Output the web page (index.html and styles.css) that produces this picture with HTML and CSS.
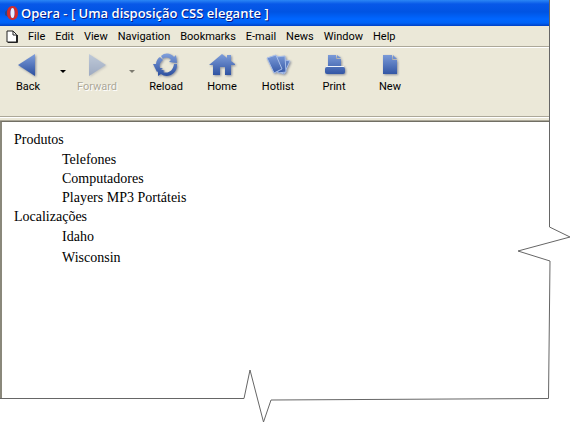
FILE: index.html
```
<!DOCTYPE html>
<html lang="pt">
<head>
<meta charset="utf-8">
<title>Uma disposição CSS elegante</title>
<link rel="stylesheet" href="styles.css">
</head>
<body>
<div class="window">
  <header class="titlebar">
    <svg class="logo" width="14" height="16" viewBox="0 0 14 16" aria-hidden="true">
      <path d="M0 7L3 4V12L0 10Z" fill="#24468f"/>
      <path fill-rule="evenodd" d="M7.500 1C11 1 13 4 13 8S11 15 7.500 15S2 12 2 8S4 1 7.500 1ZM7.500 3C6.200 3 5.500 5 5.500 8S6.200 13 7.500 13S9.500 11 9.500 8S8.800 3 7.500 3Z" fill="#d22c2c"/>
      <path d="M7.500 3C6.200 3 5.500 5 5.500 8S6.200 13 7.500 13S9.500 11 9.500 8S8.800 3 7.500 3Z" fill="#e8eefc"/>
    </svg>
    <h1 class="title">Opera - [ Uma disposição CSS elegante ]</h1>
  </header>
  <nav class="menubar">
    <svg class="page-icon" width="12" height="13" viewBox="0 0 12 13" aria-hidden="true">
      <path d="M1 1H7L10.500 4.500V12H1Z" fill="#fff" stroke="#222"/>
      <path d="M7 1V5H10.500M2 12.500H11.500V5" fill="none" stroke="#222"/>
    </svg>
    <button class="menu">File</button>
    <button class="menu">Edit</button>
    <button class="menu">View</button>
    <button class="menu">Navigation</button>
    <button class="menu">Bookmarks</button>
    <button class="menu">E-mail</button>
    <button class="menu">News</button>
    <button class="menu">Window</button>
    <button class="menu">Help</button>
  </nav>
  <div class="toolbar">
    <svg class="defs" width="0" height="0" aria-hidden="true">
      <linearGradient id="blue" x1="0" y1="0" x2="0" y2="26" gradientUnits="userSpaceOnUse">
        <stop offset="0" stop-color="#86a5e0"/><stop offset="1" stop-color="#24489a"/>
      </linearGradient>
    </svg>
    <button class="tool">
      <svg class="icon" width="28" height="26" viewBox="0 0 28 26" aria-hidden="true"><path d="M4 13L21 2V24Z"/></svg>
      <span>Back</span>
    </button>
    <button class="drop" aria-label="Back history"></button>
    <button class="tool" disabled>
      <svg class="icon" width="28" height="26" viewBox="0 0 28 26" aria-hidden="true"><path d="M6 2L23 13L6 24Z"/></svg>
      <span>Forward</span>
    </button>
    <button class="drop" aria-label="Forward history" disabled></button>
    <button class="tool">
      <svg class="icon" width="28" height="26" viewBox="0 0 28 26" aria-hidden="true">
        <path d="M9 4C13 0 19 1 22 5L24 3L25 11L17 10L19 8C17 5 13 5 11 7Z"/>
        <path d="M8 5L11 8C8 10 7 13 8 16L11 16L5 20L1 12L4 12C4 9 6 6 8 5Z"/>
        <path d="M22 12H25C26 22 15 27 9 22L6 24L6 16L13 19L11 20C16 22 21 19 22 12Z"/>
      </svg>
      <span>Reload</span>
    </button>
    <button class="tool">
      <svg class="icon" width="28" height="26" viewBox="0 0 28 26" aria-hidden="true"><path d="M1 13L14 2L19 6V3H23V9L27 12V13H23V23H17V15H12V23H5V13Z"/></svg>
      <span>Home</span>
    </button>
    <button class="tool">
      <svg class="icon split" width="28" height="26" viewBox="0 0 28 26" aria-hidden="true">
        <path d="M17 7L26 9L20 22L12 19Z"/><path d="M12 5L21 4L22 20L14 21Z"/><path d="M3 6L12 3L18 17L10 21Z"/>
      </svg>
      <span>Hotlist</span>
    </button>
    <button class="tool">
      <svg class="icon" width="28" height="26" viewBox="0 0 28 26" aria-hidden="true">
        <path d="M8 3H16V7H21V14H8Z"/><path d="M17 3L21 6H17Z"/><path d="M7 15H23Q25 15 25 17V20Q25 22 23 22H7Q5 22 5 20V17Q5 15 7 15Z"/><path class="shine" d="M6 14.500H24"/>
      </svg>
      <span>Print</span>
    </button>
    <button class="tool">
      <svg class="icon" width="28" height="26" viewBox="0 0 28 26" aria-hidden="true"><path d="M7 3H16V8H21V22H7Z"/><path d="M17 3L21 7H17Z"/></svg>
      <span>New</span>
    </button>
  </div>
  <main class="page">
    <ul class="list">
      <li>Produtos
        <ul class="sublist">
          <li>Telefones</li>
          <li>Computadores</li>
          <li>Players MP3 Portáteis</li>
        </ul>
      </li>
      <li>Localizações
        <ul class="sublist spaced">
          <li>Idaho</li>
          <li>Wisconsin</li>
        </ul>
      </li>
    </ul>
  </main>
</div>
<svg class="tear" viewBox="0 0 573 423" preserveAspectRatio="none" aria-hidden="true">
  <path d="M549.500 0V227L570 237L518 251L550 261L548.500 398.500L271 400L263.500 422L250 370L244 398.500H0"/>
</svg>
</body>
</html>
```
FILE: styles.css
```
* {
  box-sizing: border-box;
}

body {
  position: relative;
  display: flex;
  min-height: 100vh;
  margin: 0;
  padding: 0 23px 25px 0;
  background: #fff;
  font-family: Roboto, sans-serif;
  font-size: 11px;
}

button {
  padding: 0;
  border: 0;
  background: none;
  color: #000;
  font: inherit;
}

.window {
  display: flex;
  flex: 1;
  flex-direction: column;
}

.titlebar {
  display: flex;
  align-items: center;
  gap: 2px;
  height: 26px;
  padding-left: 5px;
  background: linear-gradient(#2b86f5 0, #0858e8 4px, #0054e3 12px, #0066ff 19px, #0062f5 23px, #003fc4 26px);
}

.title {
  margin: 0;
  color: #fff;
  font-family: "Open Sans", sans-serif;
  font-size: 13px;
  font-weight: 600;
  line-height: 16px;
  text-shadow: 1px 1px #0a1883;
  white-space: nowrap;
}

.menubar {
  display: flex;
  align-items: center;
  gap: 10px;
  height: 21px;
  padding-left: 6px;
  border-bottom: 1px solid #aca899;
  background: #ebe8d8;
}

.toolbar {
  display: flex;
  align-items: flex-start;
  height: 70px;
  padding-top: 4px;
  border-top: 1px solid #fff;
  border-bottom: 1px solid #aca899;
  background: #ebe8d8;
}

.defs {
  position: absolute;
}

.tool {
  display: flex;
  flex-direction: column;
  align-items: center;
  gap: 1px;
  width: 56px;
  line-height: 16px;
}

.tool:disabled {
  color: #aca899;
  text-shadow: 1px 1px #fff;
}

.icon {
  fill: url(#blue);
  filter: drop-shadow(1px 1px 1px #8d919c);
}

.split {
  stroke: #a9bfe9;
}

.shine {
  stroke: #eef2fa;
}

.tool:disabled .icon {
  opacity: 0.4;
}

.drop {
  width: 13px;
  height: 38px;
}

.drop::before {
  content: "";
  display: block;
  width: 0;
  margin: 0 auto;
  border: 3px solid transparent;
  border-top-color: #000;
  border-bottom: 0;
}

.drop:disabled::before {
  border-top-color: #7d7b70;
}

.page {
  flex: 1;
  margin-top: 4px;
  padding: 8px 12px;
  border-top: 1px solid #716f64;
  border-left: 2px solid #8a887b;
  box-shadow: 0 -1px #aca899, 0 -3px #ebe8d8, 0 -4px #fff;
  background: #fff;
  font-family: "Liberation Serif", serif;
  font-size: 14px;
  line-height: 19px;
}

.list,
.sublist {
  margin: 0;
  padding: 0;
  list-style: none;
}

.sublist {
  display: grid;
  padding: 1px 0 0 48px;
}

.spaced {
  gap: 2px;
}

.tear {
  position: absolute;
  inset: 0;
  width: 100%;
  height: 100%;
  fill: none;
  stroke: #666;
  pointer-events: none;
}
```
